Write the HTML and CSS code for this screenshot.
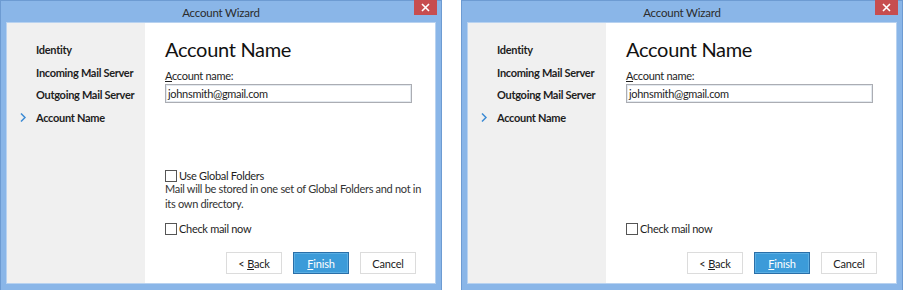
FILE: index.html
```html
<!DOCTYPE html>
<html lang="en">
  <head>
    <meta charset="UTF-8" />
    <title>Account Wizard</title>
    <link rel="stylesheet" href="styles.css">
  </head>
  <body>
    <div class="desk">
      <!-- first dialog: with global folders option -->
      <div class="window">
        <div class="titlebar">
          <span class="title">Account Wizard</span>
          <span class="close">
            <svg width="9" height="9" viewBox="0 0 9 9"><path d="M1 1L8 8M8 1L1 8" stroke="#fff" stroke-width="1.6"/></svg>
          </span>
        </div>
        <div class="client">
          <ul class="steps">
            <li>Identity</li>
            <li>Incoming Mail Server</li>
            <li>Outgoing Mail Server</li>
            <li class="current">
              <svg class="chev" width="6" height="9" viewBox="0 0 6 9"><path d="M1 0.5L5 4.5L1 8.5" fill="none" stroke="#3a8ad4" stroke-width="1.5"/></svg>
              Account Name
            </li>
          </ul>
          <div class="page">
            <h1>Account Name</h1>
            <label class="field-label"><u>A</u>ccount name:</label>
            <div class="textbox">johnsmith@gmail.com</div>
            <div class="spacer"></div>
            <div class="check"><span class="box"></span>Use Global Folders</div>
            <p class="note">Mail will be stored in one set of Global Folders and not in<br>its own directory.</p>
            <div class="check last"><span class="box"></span>Check mail now</div>
            <div class="buttons">
              <button class="btn">&lt; <u>B</u>ack</button>
              <button class="btn primary"><u>F</u>inish</button>
              <button class="btn">Cancel</button>
            </div>
          </div>
        </div>
      </div>

      <!-- second dialog: without it -->
      <div class="window">
        <div class="titlebar">
          <span class="title">Account Wizard</span>
          <span class="close">
            <svg width="9" height="9" viewBox="0 0 9 9"><path d="M1 1L8 8M8 1L1 8" stroke="#fff" stroke-width="1.6"/></svg>
          </span>
        </div>
        <div class="client">
          <ul class="steps">
            <li>Identity</li>
            <li>Incoming Mail Server</li>
            <li>Outgoing Mail Server</li>
            <li class="current">
              <svg class="chev" width="6" height="9" viewBox="0 0 6 9"><path d="M1 0.5L5 4.5L1 8.5" fill="none" stroke="#3a8ad4" stroke-width="1.5"/></svg>
              Account Name
            </li>
          </ul>
          <div class="page">
            <h1>Account Name</h1>
            <label class="field-label"><u>A</u>ccount name:</label>
            <div class="textbox">johnsmith@gmail.com</div>
            <div class="spacer"></div>
            <div class="check last"><span class="box"></span>Check mail now</div>
            <div class="buttons">
              <button class="btn">&lt; <u>B</u>ack</button>
              <button class="btn primary"><u>F</u>inish</button>
              <button class="btn">Cancel</button>
            </div>
          </div>
        </div>
      </div>
    </div>
  </body>
</html>
```

FILE: styles.css
```css
body {
  margin: 0;
  padding: 0;
  background: #fff;
  font-family: "Lato", "Open Sans", sans-serif;
  color: #1e1e1e;
}

.desk {
  display: flex;
  gap: 19px;
}

.window {
  width: 442px;
  height: 290px;
  flex-shrink: 0;
  box-sizing: border-box;
  background: #8ab6e8;
  border: 1px solid #6d9bd2;
  border-bottom: 0;
  padding: 0 5px 6px 5px;
  display: flex;
  flex-direction: column;
}

.titlebar {
  height: 21px;
  position: relative;
  display: flex;
  justify-content: center;
  align-items: center;
}

.title {
  font-size: 11.5px;
  letter-spacing: -0.2px;
  color: #2b2b2b;
  padding-top: 1px;
}

/* close button sits over the title bar */
.close {
  position: absolute;
  right: -1px;
  top: -1px;
  width: 23px;
  height: 15px;
  background: #c74d4f;
  display: flex;
  align-items: center;
  justify-content: center;
}

.client {
  flex: 1;
  display: flex;
  background: #fff;
  border: 1px solid #b8d2f0;
}

.steps {
  width: 138px;
  flex-shrink: 0;
  margin: 0;
  padding: 19px 0 0 0;
  list-style: none;
  background: #f0f0f0;
}

.steps li {
  font-size: 11px;
  font-weight: 700;
  letter-spacing: -0.3px;
  white-space: nowrap;
  height: 22.6px;
  line-height: 16px;
  padding-left: 29px;
  position: relative;
}

.chev {
  position: absolute;
  left: 13px;
  top: 3px;
}

.page {
  flex: 1;
  min-width: 0;
  display: flex;
  flex-direction: column;
  padding: 13px 19px 9px 20px;
  font-size: 11px;
  letter-spacing: -0.3px;
}

h1 {
  margin: 0;
  font-size: 20px;
  font-weight: 400;
  letter-spacing: -0.3px;
  line-height: 26px;
  color: #111;
}

.field-label {
  margin-top: 7px;
  line-height: 14px;
}

.textbox {
  margin-top: 1px;
  width: 243px;
  height: 17px;
  border: 1px solid #abadb3;
  line-height: 17px;
  padding-left: 2px;
  box-shadow: inset 0 0 0 1px #e3e9ef;
}

.spacer {
  flex: 1;
}

.check {
  display: flex;
  align-items: center;
  line-height: 14px;
}

.check.last {
  margin-top: 11px;
}

.box {
  width: 10px;
  height: 10px;
  border: 1px solid #555;
  background: #fff;
  margin-right: 2px;
}

/* first line runs a little past the buttons' right edge */
.note {
  margin: -2px -14px 0 0;
  line-height: 15px;
  color: #333;
  white-space: nowrap;
}

.buttons {
  display: flex;
  justify-content: flex-end;
  gap: 11px;
  margin-top: 16px;
}

.btn {
  width: 56px;
  height: 22px;
  font-family: inherit;
  font-size: 11px;
  letter-spacing: -0.2px;
  color: #222;
  background: #fff;
  border: 1px solid #dcdcdc;
  padding: 0;
}

.btn.primary {
  background: #3c9bd9;
  border: 1px solid #2a6fa8;
  box-shadow: inset 0 0 0 1px #5aaee3;
  color: #fff;
}
```
